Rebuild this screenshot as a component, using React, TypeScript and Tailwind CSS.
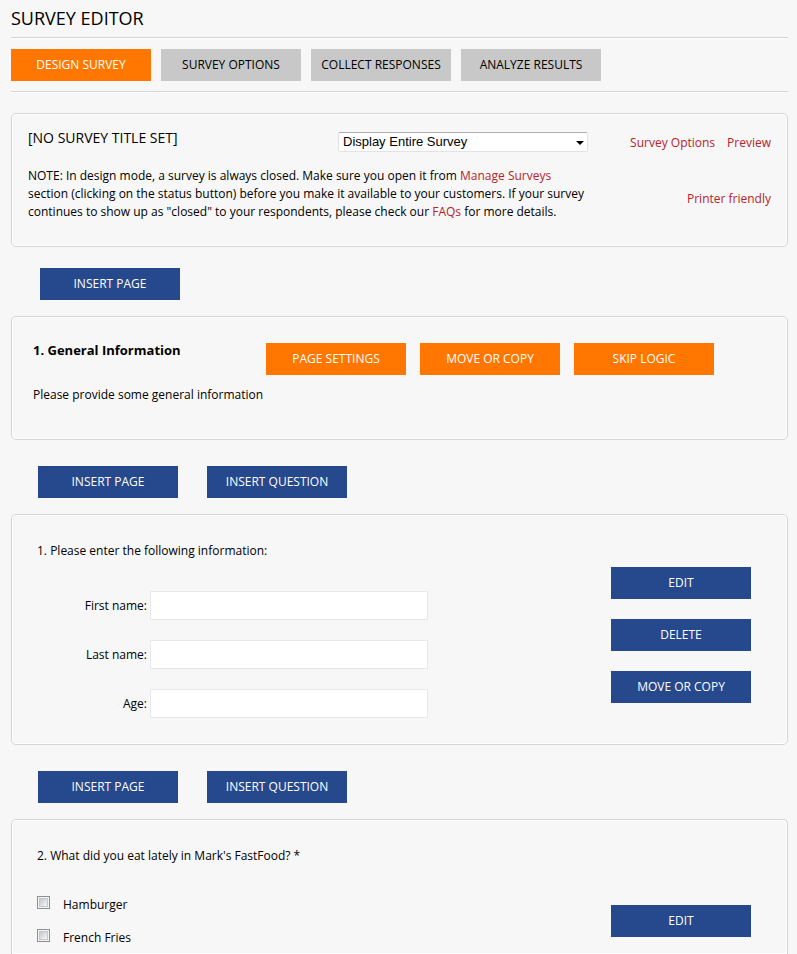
import type { ReactNode } from 'react';
import clsx from 'clsx';

type Tone = 'orange' | 'gray' | 'blue';

const TONES: Record<Tone, string> = {
  orange: 'bg-[#ff7700] text-white',
  gray: 'bg-[#c8c8c8] text-black',
  blue: 'bg-[#26488c] text-white',
};

const TABS = ['Design Survey', 'Survey Options', 'Collect Responses', 'Analyze Results'];
const PAGE_ACTIONS = ['Page Settings', 'Move or Copy', 'Skip Logic'];
const FIELDS = [
  { id: 'first-name', label: 'First name:' },
  { id: 'last-name', label: 'Last name:' },
  { id: 'age', label: 'Age:' },
];
const FOODS = ['Hamburger', 'French Fries'];

function Button({ tone = 'blue', children }: { tone?: Tone; children: ReactNode }) {
  return (
    <button type="button" className={clsx('h-8 w-[140px] shrink-0 text-[12px] leading-8 whitespace-nowrap uppercase', TONES[tone])}>
      {children}
    </button>
  );
}

function Card({ className, children }: { className?: string; children: ReactNode }) {
  return (
    <section className={clsx('border border-[#d5d5d5] shadow-[inset_0_0_0_1px_#fff]', className)}>
      {children}
    </section>
  );
}

function Link({ children }: { children: ReactNode }) {
  return (
    <a href="#" className="text-[#b8222a] hover:underline">
      {children}
    </a>
  );
}

function InsertBar() {
  return (
    <div className="flex gap-[29px] pt-[26px] pb-4 pl-[27px]">
      <Button>Insert Page</Button>
      <Button>Insert Question</Button>
    </div>
  );
}

export default function App() {
  return (
    <main className="flex min-h-screen flex-col bg-[#f7f7f7] pr-[9px] pl-[11px] font-['Open_Sans','Noto_Sans',sans-serif] text-[12px] leading-[18px] text-black">
      <h1 className="border-b border-[#d5d5d5] pt-1.5 pb-[7px] text-[18px] leading-6 uppercase shadow-[0_1px_0_#fff]">
        Survey Editor
      </h1>

      <nav className="flex gap-2.5 border-b border-[#d5d5d5] pt-[11px] pb-2.5 shadow-[0_1px_0_#fff]">
        {TABS.map((tab, i) => (
          <Button key={tab} tone={i === 0 ? 'orange' : 'gray'}>
            {tab}
          </Button>
        ))}
      </nav>

      <Card className="mt-[21px] flex rounded-[5px] px-4 pt-[14px] pb-[25px]">
        <div className="min-w-0 flex-1">
          <div className="flex items-start justify-between">
            <h2 className="text-[14px] leading-5">[NO SURVEY TITLE SET]</h2>
            <div className="relative mt-1 w-[250px]">
              <select
                aria-label="Displayed pages"
                className="block h-5 w-full appearance-none rounded-[2px] border border-[#e2e3ea] border-t-[#abadb3] bg-white pl-1 font-['Liberation_Sans',Arial,sans-serif] text-[13px] leading-[18px]"
              >
                <option>Display Entire Survey</option>
              </select>
              <svg className="pointer-events-none absolute top-[9px] right-1" width="8" height="4" viewBox="0 0 8 4" aria-hidden="true">
                <path d="M0 0h8L4 4z" />
              </svg>
            </div>
          </div>
          <p className="mt-[15px]">
            NOTE: In design mode, a survey is always closed. Make sure you open it from <Link>Manage Surveys</Link> section
            (clicking on the status button) before you make it available to your customers. If your survey continues to
            show up as "closed" to your respondents, please check our <Link>FAQs</Link> for more details.
          </p>
        </div>
        <div className="mt-1.5 flex w-[183px] shrink-0 flex-col items-end gap-[38px]">
          <div className="flex gap-3">
            <Link>Survey Options</Link>
            <Link>Preview</Link>
          </div>
          <Link>Printer friendly</Link>
        </div>
      </Card>

      <div className="pt-[21px] pb-4 pl-[29px]">
        <Button>Insert Page</Button>
      </div>

      <Card className="rounded-[5px] px-[21px] pt-6 pb-[35px]">
        <div className="flex items-start">
          <h3 className="w-[233px] shrink-0 text-[13px] font-bold">1. General Information</h3>
          <div className="mt-0.5 flex gap-[14px]">
            {PAGE_ACTIONS.map((action) => (
              <Button key={action} tone="orange">
                {action}
              </Button>
            ))}
          </div>
        </div>
        <p className="mt-[11px]">Please provide some general information</p>
      </Card>

      <InsertBar />

      <Card className="flex justify-between rounded-[5px] pt-[27px] pr-9 pb-[26px] pl-[25px]">
        <div>
          <h4>1. Please enter the following information:</h4>
          <div className="mt-[31px] flex flex-col gap-5">
            {FIELDS.map((field) => (
              <div key={field.id} className="flex items-center gap-[3px]">
                <label htmlFor={field.id} className="w-[110px] text-right">
                  {field.label}
                </label>
                <input id={field.id} type="text" className="h-[29px] w-[278px] border border-[#e8e8e8] bg-white px-2" />
              </div>
            ))}
          </div>
        </div>
        <div className="mt-[25px] flex flex-col gap-5">
          <Button>Edit</Button>
          <Button>Delete</Button>
          <Button>Move or Copy</Button>
        </div>
      </Card>

      <InsertBar />

      <Card className="flex flex-1 justify-between rounded-t-[5px] border-b-0 pt-[27px] pr-9 pl-[25px]">
        <div>
          <h4>2. What did you eat lately in Mark's FastFood? *</h4>
          <div className="mt-[31px] flex flex-col gap-[15px]">
            {FOODS.map((food) => (
              <label key={food} className="flex items-start gap-[13px]">
                <input
                  type="checkbox"
                  className="size-[13px] appearance-none border border-[#8e8f8f] bg-linear-to-br from-[#c4c8d0] from-20% to-[#f6f6f6] to-80% shadow-[inset_0_0_0_1px_#f4f4f4,inset_0_0_0_2px_#c4c8ce] checked:bg-[#26488c]"
                />
                {food}
              </label>
            ))}
          </div>
        </div>
        <div className="mt-[58px]">
          <Button>Edit</Button>
        </div>
      </Card>
    </main>
  );
}
